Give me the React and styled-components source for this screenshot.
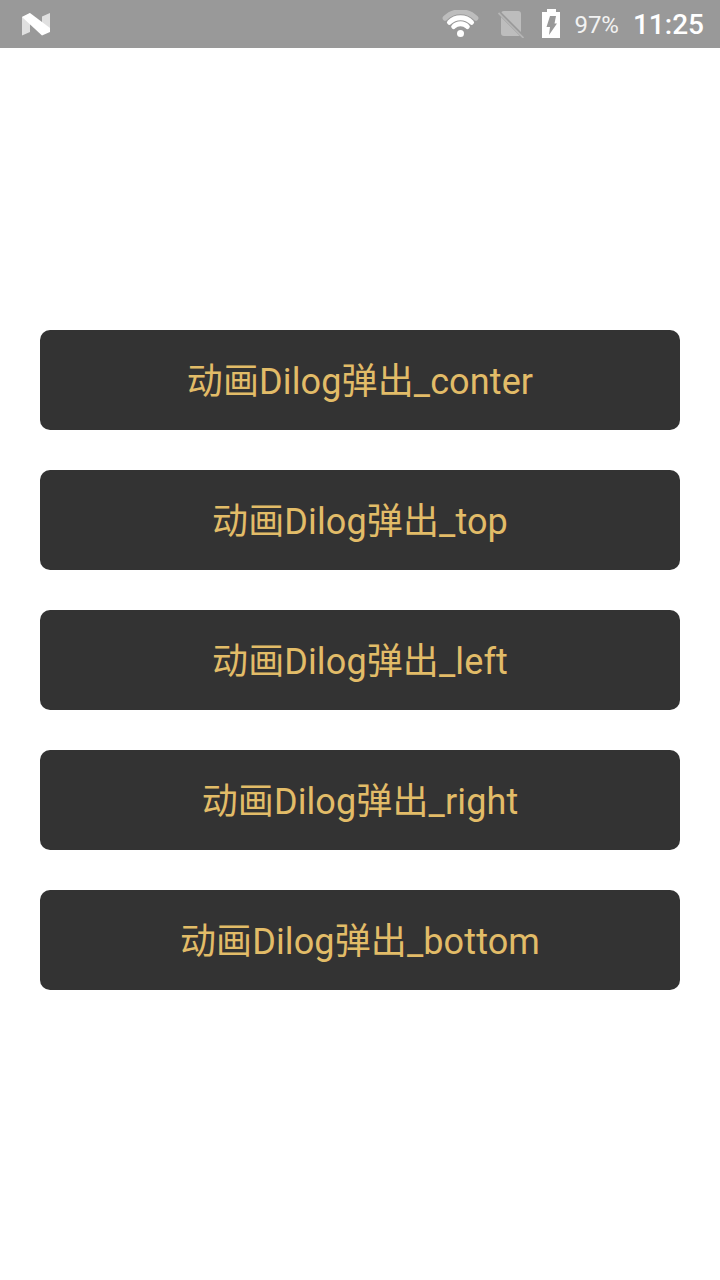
import React from 'react'
import styled, { createGlobalStyle } from 'styled-components'

const GlobalStyle = createGlobalStyle`
html, body {
    margin: 0;
    padding: 0;
    background: #fff;
}
`
const Screen = styled.div`
width: 720px;
height: 1280px;
overflow: hidden;
background: #fff;
font-family: Roboto, "Noto Sans CJK SC", sans-serif;
`
const StatusBar = styled.div`
height: 48px;
background: #999999;
display: flex;
align-items: center;
padding: 0 16px 0 20px;
box-sizing: border-box;
color: #fff;
`
const StatusRight = styled.div`
margin-left: auto;
display: flex;
align-items: center;
`
const Percent = styled.span`
font-size: 24px;
color: #f2f2f2;
margin: 2px 0 0 13px;
`
const Clock = styled.span`
font-size: 28px;
font-weight: 500;
margin: 1px 0 0 14px;
`
const ButtonList = styled.div`
display: flex;
flex-direction: column;
gap: 40px;
padding: 282px 40px 0;
`
const DialogButton = styled.button`
height: 100px;
border: none;
border-radius: 10px;
background: #333333;
color: #e2bc68;
font-family: inherit;
font-size: 36px;
letter-spacing: 0.12px;
padding: 0 0 4px;
`
const SimIcon = styled.svg`
margin-left: 18px;
`
const BatteryIcon = styled.svg`
margin-left: 17px;
`

const labels = ['conter', 'top', 'left', 'right', 'bottom']

function App() {
    return (
        <Screen>
            <GlobalStyle />
            <StatusBar>
                <svg width="32" height="26" viewBox="0 0 32 26">
                    <path d="M2 6 L10 2 L10 21 L2 24.500Z" fill="#e0e0e0" />
                    <path d="M22 5.500 L30 2 L30 21 L22 17Z" fill="#e0e0e0" />
                    <path d="M2 6 L10 2 L30 17 L30 21 L22 24.500Z" fill="#fff" />
                </svg>
                <StatusRight>
                    <svg width="38" height="28" viewBox="0 0 38 28" fill="none">
                        <path d="M3.120 8.120 A21.750 21.750 0 0 1 33.880 8.120" stroke="#bdbdbd" strokeWidth="5" strokeLinecap="round" />
                        <path d="M7.360 12.360 A15.750 15.750 0 0 1 29.640 12.360" stroke="#fff" strokeWidth="4.800" strokeLinecap="round" />
                        <path d="M11.610 16.610 A9.750 9.750 0 0 1 25.390 16.610" stroke="#fff" strokeWidth="4.800" strokeLinecap="round" />
                        <circle cx="18.500" cy="23.500" r="3.500" fill="#fff" />
                    </svg>
                    <SimIcon width="26" height="28" viewBox="0 0 26 28">
                        <rect x="3" y="1" width="20" height="25" rx="3" fill="#bdbdbd" />
                        <path d="M0 1.500 L26 27.500" stroke="#999999" strokeWidth="3.500" />
                        <path d="M0.500 3 L25.500 28" stroke="#b5b5b5" strokeWidth="1.800" />
                    </SimIcon>
                    <BatteryIcon width="20" height="30" viewBox="0 0 20 30">
                        <path d="M6 0 H15 V3 H19 V29 H1 V3 H6Z" fill="#fff" />
                        <path d="M9 7 H15 L13.500 14.500 H16 L8 26 L9 18 H5.500Z" fill="#999999" />
                    </BatteryIcon>
                    <Percent>97%</Percent>
                    <Clock>11:25</Clock>
                </StatusRight>
            </StatusBar>
            <ButtonList>
                {labels.map((label) => {
                    return <DialogButton key={label}>动画Dilog弹出_{label}</DialogButton>
                })}
            </ButtonList>
        </Screen>
    )
}

export default App
